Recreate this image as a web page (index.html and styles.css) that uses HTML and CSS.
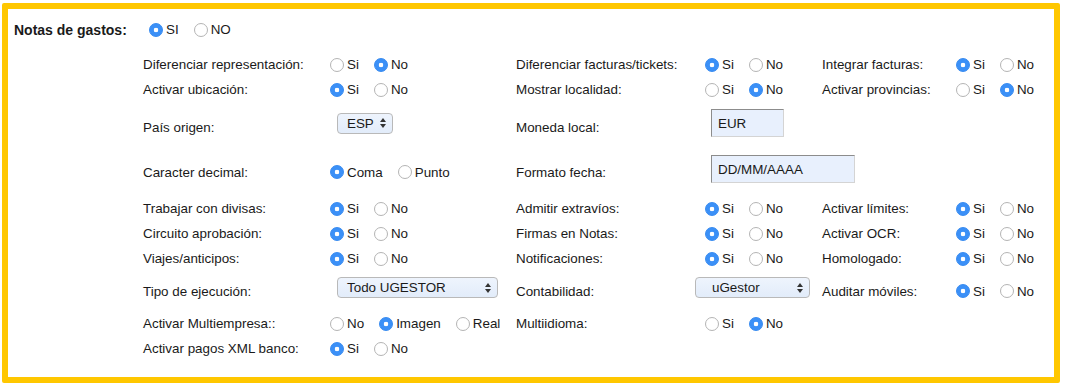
FILE: index.html
```html
<!DOCTYPE html>
<html lang="es">
<head>
  <meta charset="UTF-8">
  <title>Notas de gastos</title>
  <link rel="stylesheet" href="styles.css">
</head>
<body>
  <div class="panel">
    <div class="main-row">
      <span class="main-label">Notas de gastos:</span>
      <div class="opts">
        <label class="opt"><input type="radio" name="notas" checked>SI</label>
        <label class="opt"><input type="radio" name="notas">NO</label>
      </div>
    </div>

    <div class="settings">
      <div class="row">
        <span class="lbl">Diferenciar representación:</span>
        <div class="opts">
          <label class="opt"><input type="radio" name="repr">Si</label>
          <label class="opt"><input type="radio" name="repr" checked>No</label>
        </div>
        <span class="lbl">Diferenciar facturas/tickets:</span>
        <div class="opts">
          <label class="opt"><input type="radio" name="tickets" checked>Si</label>
          <label class="opt"><input type="radio" name="tickets">No</label>
        </div>
        <span class="lbl">Integrar facturas:</span>
        <div class="opts">
          <label class="opt"><input type="radio" name="integrar" checked>Si</label>
          <label class="opt"><input type="radio" name="integrar">No</label>
        </div>
      </div>

      <div class="row">
        <span class="lbl">Activar ubicación:</span>
        <div class="opts">
          <label class="opt"><input type="radio" name="ubic" checked>Si</label>
          <label class="opt"><input type="radio" name="ubic">No</label>
        </div>
        <span class="lbl">Mostrar localidad:</span>
        <div class="opts">
          <label class="opt"><input type="radio" name="local">Si</label>
          <label class="opt"><input type="radio" name="local" checked>No</label>
        </div>
        <span class="lbl">Activar provincias:</span>
        <div class="opts">
          <label class="opt"><input type="radio" name="prov">Si</label>
          <label class="opt"><input type="radio" name="prov" checked>No</label>
        </div>
      </div>

      <div class="row row-field">
        <span class="lbl">País origen:</span>
        <div class="opts">
          <div class="select sel-esp">ESP<svg class="arrows" width="6" height="10" viewBox="0 0 6 10"><path d="M3 0 L6 4 L0 4 Z M0 6 L6 6 L3 10 Z" fill="#333"/></svg></div>
        </div>
        <span class="lbl">Moneda local:</span>
        <div class="opts">
          <input class="text-in in-eur" type="text" value="EUR">
        </div>
      </div>

      <div class="row row-field row-date">
        <span class="lbl">Caracter decimal:</span>
        <div class="opts">
          <label class="opt"><input type="radio" name="dec" checked>Coma</label>
          <label class="opt"><input type="radio" name="dec">Punto</label>
        </div>
        <span class="lbl">Formato fecha:</span>
        <div class="opts">
          <input class="text-in in-date" type="text" value="DD/MM/AAAA">
        </div>
      </div>

      <div class="row row-gap">
        <span class="lbl">Trabajar con divisas:</span>
        <div class="opts">
          <label class="opt"><input type="radio" name="div" checked>Si</label>
          <label class="opt"><input type="radio" name="div">No</label>
        </div>
        <span class="lbl">Admitir extravíos:</span>
        <div class="opts">
          <label class="opt"><input type="radio" name="extr" checked>Si</label>
          <label class="opt"><input type="radio" name="extr">No</label>
        </div>
        <span class="lbl">Activar límites:</span>
        <div class="opts">
          <label class="opt"><input type="radio" name="lim" checked>Si</label>
          <label class="opt"><input type="radio" name="lim">No</label>
        </div>
      </div>

      <div class="row">
        <span class="lbl">Circuito aprobación:</span>
        <div class="opts">
          <label class="opt"><input type="radio" name="circ" checked>Si</label>
          <label class="opt"><input type="radio" name="circ">No</label>
        </div>
        <span class="lbl">Firmas en Notas:</span>
        <div class="opts">
          <label class="opt"><input type="radio" name="firm" checked>Si</label>
          <label class="opt"><input type="radio" name="firm">No</label>
        </div>
        <span class="lbl">Activar OCR:</span>
        <div class="opts">
          <label class="opt"><input type="radio" name="ocr" checked>Si</label>
          <label class="opt"><input type="radio" name="ocr">No</label>
        </div>
      </div>

      <div class="row">
        <span class="lbl">Viajes/anticipos:</span>
        <div class="opts">
          <label class="opt"><input type="radio" name="viaj" checked>Si</label>
          <label class="opt"><input type="radio" name="viaj">No</label>
        </div>
        <span class="lbl">Notificaciones:</span>
        <div class="opts">
          <label class="opt"><input type="radio" name="notif" checked>Si</label>
          <label class="opt"><input type="radio" name="notif">No</label>
        </div>
        <span class="lbl">Homologado:</span>
        <div class="opts">
          <label class="opt"><input type="radio" name="homo" checked>Si</label>
          <label class="opt"><input type="radio" name="homo">No</label>
        </div>
      </div>

      <div class="row row-select">
        <span class="lbl">Tipo de ejecución:</span>
        <div class="opts">
          <div class="select sel-tipo">Todo UGESTOR<svg class="arrows" width="6" height="10" viewBox="0 0 6 10"><path d="M3 0 L6 4 L0 4 Z M0 6 L6 6 L3 10 Z" fill="#333"/></svg></div>
        </div>
        <span class="lbl">Contabilidad:</span>
        <div class="opts">
          <div class="select sel-conta">uGestor<svg class="arrows" width="6" height="10" viewBox="0 0 6 10"><path d="M3 0 L6 4 L0 4 Z M0 6 L6 6 L3 10 Z" fill="#333"/></svg></div>
        </div>
        <span class="lbl">Auditar móviles:</span>
        <div class="opts">
          <label class="opt"><input type="radio" name="movil" checked>Si</label>
          <label class="opt"><input type="radio" name="movil">No</label>
        </div>
      </div>

      <div class="row row-multi">
        <span class="lbl">Activar Multiempresa::</span>
        <div class="opts">
          <label class="opt"><input type="radio" name="multi">No</label>
          <label class="opt"><input type="radio" name="multi" checked>Imagen</label>
          <label class="opt"><input type="radio" name="multi">Real</label>
        </div>
        <span class="lbl">Multiidioma:</span>
        <div class="opts">
          <label class="opt"><input type="radio" name="idioma">Si</label>
          <label class="opt"><input type="radio" name="idioma" checked>No</label>
        </div>
      </div>

      <div class="row">
        <span class="lbl">Activar pagos XML banco:</span>
        <div class="opts">
          <label class="opt"><input type="radio" name="xml" checked>Si</label>
          <label class="opt"><input type="radio" name="xml">No</label>
        </div>
      </div>
    </div>
  </div>
</body>
</html>
```

FILE: styles.css
```css
body {
  margin: 0;
  font-family: "Liberation Sans", Arial, sans-serif;
  font-size: 13.4px;
  color: #1a1a1a;
  background-color: #fff;
}
.panel {
  box-sizing: border-box;
  width: 1058px;
  height: 380px;
  margin: 3px 0 0 2px;
  border: 6px solid #ffc700;
  border-radius: 2px;
  padding: 8px 0 0 6px;
}
.main-row {
  display: flex;
  align-items: center;
  height: 25px;
}
.main-label {
  width: 135px;
  font-weight: bold;
  font-size: 14px;
}
.settings {
  margin: 10px 0 0 129px;
}
.row {
  display: grid;
  grid-template-columns: 187px 186px 189px 117px 134px auto;
  align-items: center;
  min-height: 25px;
}
.row-field {
  margin-top: 7px;
}
.row-date {
  margin-top: 10px;
}
.row-gap {
  margin-top: 7px;
}
.row-select {
  margin-top: 6px;
}
.row-multi {
  margin-top: 6px;
}
.opts {
  display: flex;
  align-items: center;
}
.opt {
  display: flex;
  align-items: center;
  margin-right: 15px;
}
.opt input {
  appearance: none;
  -webkit-appearance: none;
  box-sizing: border-box;
  width: 14px;
  height: 14px;
  margin: 0 3px 0 0;
  border: 1px solid #b4b4b4;
  border-radius: 50%;
  background: #fff;
}
.opt input:checked {
  border-color: #3589f0;
  background: radial-gradient(circle, #fff 0 2px, #3b90f7 2.6px);
}
.select {
  box-sizing: border-box;
  display: flex;
  align-items: center;
  justify-content: space-between;
  height: 21px;
  padding: 0 6px 0 9px;
  border: 1px solid #b9b9b9;
  border-radius: 4px;
  background: linear-gradient(#eef4fd, #e2ecfa);
  color: #1a1a1a;
}
.sel-esp {
  width: 56px;
  margin: 0 0 8px 7px;
}
.sel-tipo {
  width: 161px;
  margin: 0 0 7px 7px;
}
.sel-conta {
  width: 115px;
  margin: 0 0 7px -10px;
  padding-left: 16px;
}
.arrows {
  display: block;
}
.text-in {
  box-sizing: border-box;
  height: 28px;
  margin: 0 0 8px 6px;
  padding: 0 6px;
  border: 1px solid #d4d4d4;
  border-top-color: #8c8c8c;
  border-left-color: #8c8c8c;
  background: #e8f0fd;
  font-family: "Liberation Sans", Arial, sans-serif;
  font-size: 13.4px;
  color: #1a1a1a;
}
.in-eur {
  width: 73px;
}
.in-date {
  width: 144px;
  margin-bottom: 6px;
}
```
